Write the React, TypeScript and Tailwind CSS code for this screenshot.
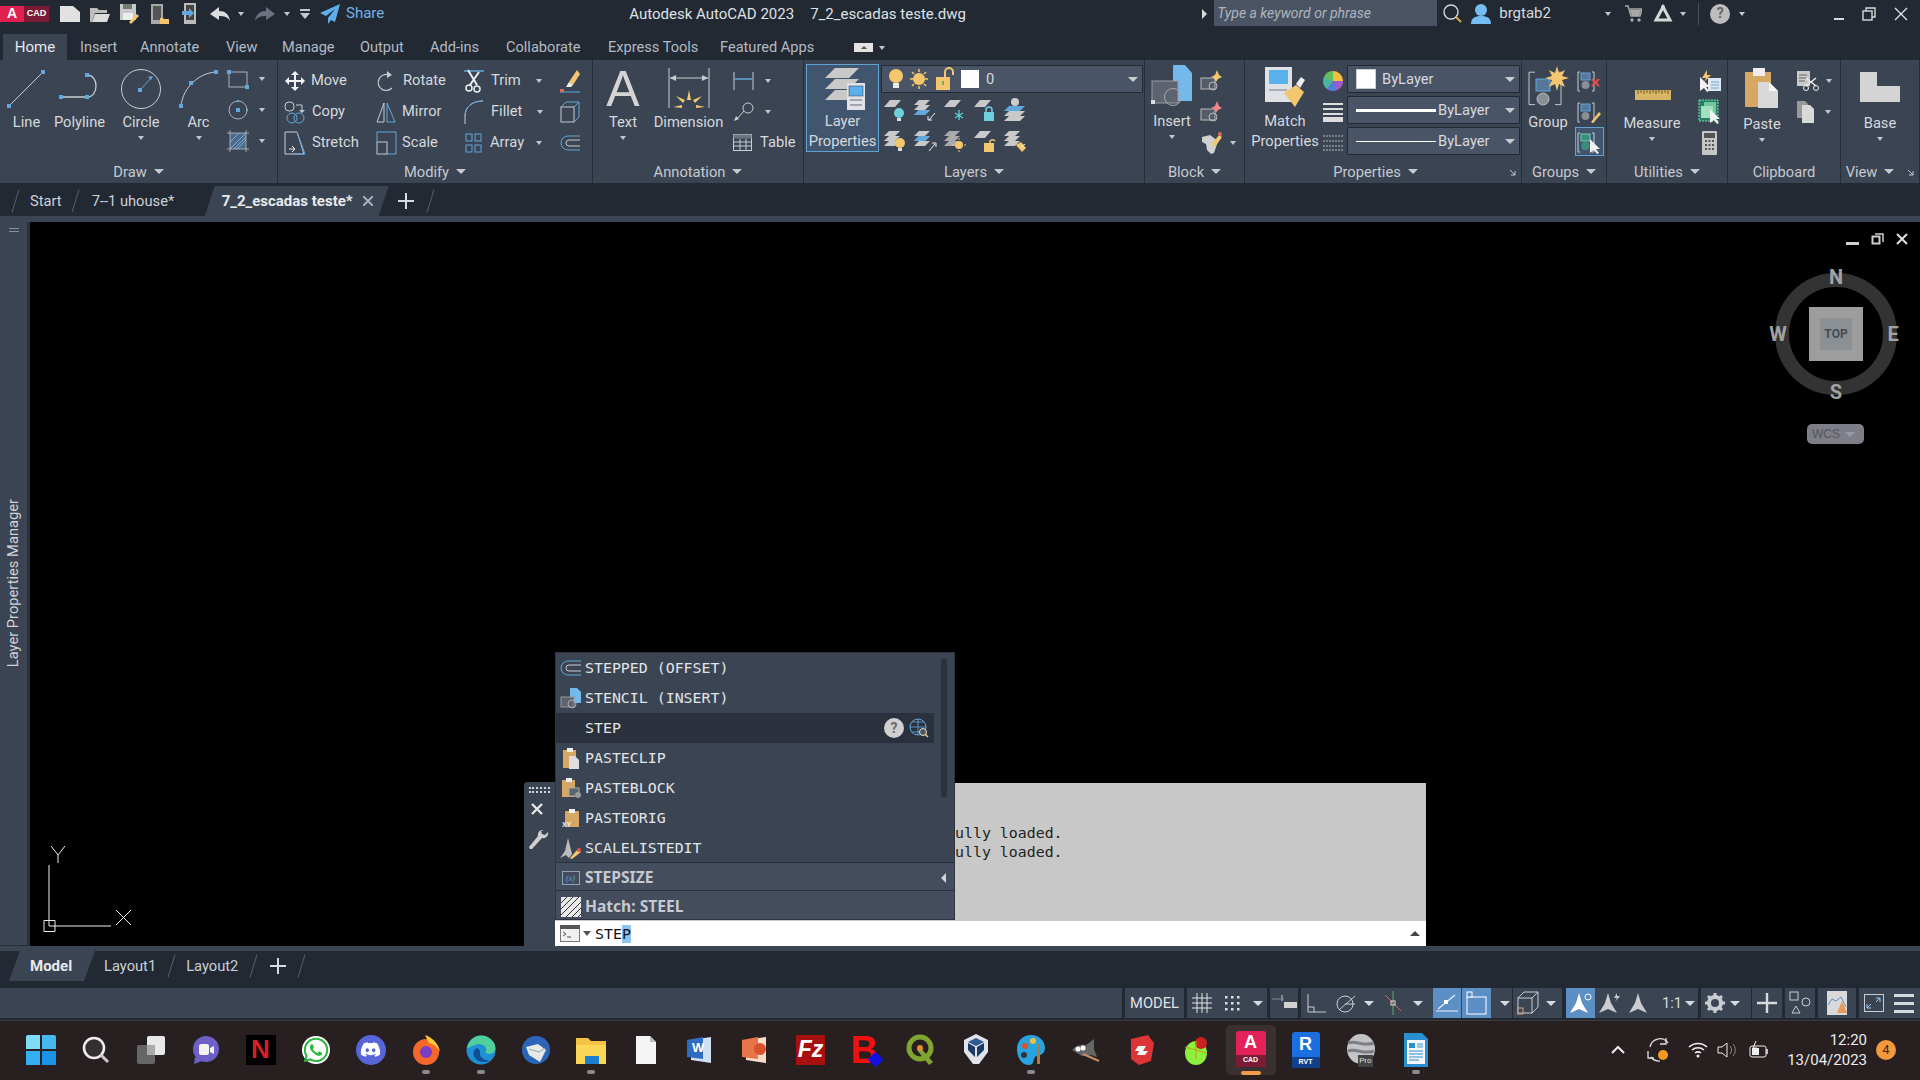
import type { ReactNode } from "react";
import { FaDiscord, FaWhatsapp } from "react-icons/fa";

const BLUE = "#62a8dc";
const GREY = "#c9ccd1";
const GOLD = "#f4c76e";
const BAR = "bg-[#222933]";

function Svg({ w, h, children }: { w: number; h: number; children: ReactNode }) {
  return (
    <svg width={w} height={h} viewBox={`0 0 ${w} ${h}`} fill="none" className="shrink-0 block">
      {children}
    </svg>
  );
}

function Caret({ className = "" }: { className?: string }) {
  return <span className={`block w-0 h-0 border-x-[3.5px] border-x-transparent border-t-[4px] border-t-[#c4c8ce] ${className}`} />;
}

function Tool({ icon, label, iconW, gap, width }: { icon: ReactNode; label?: string; iconW: number; gap: number; width: number }) {
  return (
    <div className="flex items-center h-[31px]" style={{ width }}>
      <div className="flex justify-center shrink-0" style={{ width: iconW }}>{icon}</div>
      {label && <span className="text-[14.7px] text-[#d6d9de] whitespace-nowrap" style={{ marginLeft: gap }}>{label}</span>}
    </div>
  );
}

function Big({ icon, label, width, caret, iconH = 46 }: { icon: ReactNode; label: string; width: number; caret?: boolean; iconH?: number }) {
  return (
    <div className="flex flex-col items-center shrink-0" style={{ width }}>
      <div className="flex items-center justify-center" style={{ height: iconH }}>{icon}</div>
      <span className="text-[14.7px] leading-[20px] text-[#d6d9de] whitespace-nowrap">{label}</span>
      {caret && <Caret className="mt-[4px]" />}
    </div>
  );
}

function Panel({ width, title, caret = true, expand, children, titlePull = 0 }: { width: number; title: string; caret?: boolean; expand?: boolean; children: ReactNode; titlePull?: number }) {
  return (
    <div className="flex flex-col shrink-0 border-r border-[#262d38] relative" style={{ width }}>
      <div className="h-[101px] flex overflow-visible">{children}</div>
      <div className="flex-1 flex items-center justify-center gap-[7px] text-[14.7px] text-[#c6cad0]" style={{ paddingRight: titlePull }}>
        {title}
        {caret && <span className="block w-0 h-0 border-x-[5px] border-x-transparent border-t-[5px] border-t-[#c6cad0]" />}
      </div>
      {expand && (
        <div className="absolute right-[4px] bottom-[6px]">
          <Svg w={8} h={8}><path d="M1 1l5 5M6 2v4H2" stroke="#c6cad0" /></Svg>
        </div>
      )}
    </div>
  );
}

const dot = (x: number, y: number, c = BLUE) => <rect x={x - 2} y={y - 2} width={4} height={4} fill={c} />;

const LineIc = <Svg w={40} h={40}>
  <path d="M2 37L36 3" stroke={GREY} />{dot(2, 37)}{dot(36, 3)}
</Svg>;
const PolyIc = <Svg w={44} h={36}>
  <path d="M2 26H28C40 26 40 4 28 4" stroke={GREY} strokeWidth="1.3" />{dot(2, 26)}{dot(28, 26)}{dot(28, 4)}
</Svg>;
const CircleIc = <Svg w={42} h={42}>
  <circle cx="21" cy="21" r="19.5" stroke={GREY} />
  <path d="M20 22L32 9" stroke={BLUE} />{dot(20, 22)}<path d="M33 8l-5 1 3 3z" fill={BLUE} />
</Svg>;
const ArcIc = <Svg w={40} h={40}>
  <path d="M2 37C4 18 20 4 37 3" stroke={GREY} />{dot(2, 37)}{dot(12, 14)}{dot(37, 3)}
</Svg>;
const RectIc = <Svg w={22} h={20}>
  <rect x="2" y="3" width="18" height="15" stroke={GREY} strokeWidth=".8" />{dot(2, 3)}{dot(20, 18)}
</Svg>;
const Circ2Ic = <Svg w={22} h={20}>
  <circle cx="11" cy="10" r="9" stroke={GREY} strokeWidth=".8" />{dot(11, 10)}<rect x="10" y="0" width="2" height="2" fill={BLUE} /><rect x="19" y="9" width="2" height="2" fill={BLUE} />
</Svg>;
const HatchIc = <Svg w={22} h={22}>
  <rect x="3" y="3" width="16" height="16" fill="#4a6c8c" />
  <path d="M3 12L12 3M3 19L19 3M10 19L19 10M7 19L19 7" stroke="#9fc3e2" strokeWidth=".7" />
  <path d="M0 3H22M0 19H22M3 0V22M19 0V22" stroke={GREY} strokeWidth=".7" />
</Svg>;
const MoveIc = <Svg w={22} h={22}>
  <path d="M11 1l4 4h-3v5h5V7l4 4-4 4v-3h-5v5h3l-4 4-4-4h3v-5H5v3l-4-4 4-4v3h5V5H7z" fill="#f1f2f4" />
</Svg>;
const RotateIc = <Svg w={20} h={22}>
  <path d="M13 5A8 8 0 1 0 16 18" stroke={GREY} strokeWidth="1.2" /><path d="M11 1l5 4-5 3z" fill={GREY} />
</Svg>;
const TrimIc = <Svg w={20} h={24}>
  <path d="M0 2H20" stroke={BLUE} strokeWidth="1.5" />
  <path d="M4 1l9 15M15 3L6 16" stroke="#eceef0" strokeWidth="2" />
  <circle cx="5" cy="19" r="3" stroke="#eceef0" strokeWidth="1.5" /><circle cx="13" cy="20" r="3" stroke="#eceef0" strokeWidth="1.5" />
</Svg>;
const EraserIc = <Svg w={22} h={24}>
  <path d="M10 13L18 1l3 4-7 11z" fill={GOLD} /><path d="M7 18l3-5 4 3-2 2z" fill="#f2f2f2" />
  <path d="M1 23H21" stroke={BLUE} /><rect x="1" y="20" width="4" height="3" fill="#e06a5a" />
</Svg>;
const CopyIc = <Svg w={22} h={24}>
  <rect x="1" y="2" width="9" height="9" rx="4" stroke={GREY} />
  <circle cx="8" cy="18" r="5" stroke={BLUE} /><circle cx="15" cy="18" r="5" stroke={BLUE} />
  <path d="M12 5h6v6" stroke={GREY} /><path d="M15 10l3 3 3-3z" fill={GREY} />
</Svg>;
const MirrorIc = <Svg w={20} h={24}>
  <path d="M8 3L1 22h7z" stroke={GREY} /><path d="M11 3l8 19h-8z" stroke={BLUE} />
</Svg>;
const FilletIc = <Svg w={20} h={24}>
  <path d="M1 24V16C1 7 8 1 19 1" stroke={GREY} /><path d="M1 16C1 7 8 1 19 1" stroke={BLUE} />
</Svg>;
const SolidIc = <Svg w={20} h={22}>
  <rect x="1" y="6" width="13" height="15" stroke={GREY} /><path d="M1 6l5-5h13v15l-5 5M14 6l5-5" stroke={BLUE} />
</Svg>;
const StretchIc = <Svg w={22} h={24}>
  <path d="M1 1H13L20 23H1z" stroke={GREY} /><path d="M13 1l8 22H10" stroke={BLUE} /><path d="M5 18h5M8 15l3 3-3 3" stroke="#eee" />
</Svg>;
const ScaleIc = <Svg w={21} h={24}>
  <rect x="1" y="11" width="10" height="12" stroke={GREY} /><path d="M1 11V1H20V23H11" stroke={BLUE} />
</Svg>;
const ArrayIc = <Svg w={18} h={20}>
  <g stroke={BLUE}><rect x="1" y="1" width="6" height="7" /><rect x="10" y="1" width="6" height="7" /><rect x="1" y="12" width="6" height="7" /><rect x="10" y="12" width="6" height="7" /></g>
</Svg>;
const OffsetIc = (w = 22) => <Svg w={w} h={16}>
  <path d="M21 1H8a7 7 0 0 0 0 14h13" stroke={BLUE} /><path d="M21 5H9a3 3 0 0 0 0 6h12" stroke={GREY} />
</Svg>;
const DimIc = <Svg w={42} h={42}>
  <path d="M1 0V40M41 0V40" stroke={GREY} /><path d="M2 10H40" stroke={GREY} /><path d="M2 10l6-3v6zM40 10l-6-3v6z" fill={GREY} />
  <path d="M21 22l-2 10h4zM8 28l7 7 2-3zM34 28l-7 7-2-3zM5 39l9-2v3zM37 39l-9-2v3z" fill={GOLD} />
</Svg>;
const LinearIc = <Svg w={22} h={20}><path d="M1 1V19M20 1V19" stroke={GREY} /><path d="M2 8H19" stroke={BLUE} strokeWidth="1.5" /></Svg>;
const LeaderIc = <Svg w={22} h={20}><circle cx="15" cy="6" r="5" stroke={GREY} /><path d="M11 9L3 18" stroke={GREY} /><path d="M1 19l5-2-3-3z" fill={GREY} /></Svg>;
const TableIc = <Svg w={20} h={18}><rect x=".5" y=".5" width="18" height="16" stroke={GREY} /><rect x=".5" y=".5" width="18" height="4" fill="#6c7480" /><path d="M1 8H18M1 12H18M7 5V17M13 5V17" stroke={GREY} /></Svg>;

const sheet = (y: number) => <path d={`M4 ${y}L14 ${y - 10}H38L28 ${y}z`} fill="#c9c9c9" />;
const LayerPropIc = <Svg w={48} h={46}>
  {sheet(13)}{sheet(24)}{sheet(35)}
  <rect x="26" y="18" width="18" height="27" fill="#dfe2e6" /><rect x="28" y="21" width="14" height="10" fill="#5ab0ea" stroke="#335" strokeWidth=".5" />
  <path d="M29 35h12M29 40h12" stroke="#667" />
</Svg>;

function Bulb({ color = GOLD }: { color?: string }) {
  return <Svg w={16} h={22}><circle cx="8" cy="8" r="7" fill={color} /><rect x="5" y="15" width="6" height="5" fill="#e8e8e8" /></Svg>;
}
const Sun = <Svg w={20} h={22}><circle cx="10" cy="11" r="6" fill={GOLD} /><path d="M10 1v3M10 18v3M1 11h3M16 11h3M3 4l2 2M15 16l2 2M17 4l-2 2M5 16l-2 2" stroke={GOLD} strokeWidth="1.5" /></Svg>;
const Unlock = <Svg w={20} h={24}><rect x="1" y="10" width="14" height="13" fill={GOLD} /><path d="M10 10V5a4 4 0 0 1 8 0v3" stroke={GOLD} strokeWidth="2" /><rect x="7" y="14" width="2" height="4" fill="#7a5" /></Svg>;

function LayerMini({ kind }: { kind: number }) {
  const top = <path d="M1 9L7 2h11l-6 7z" fill="#c9c9c9" />;
  const stack = (c = "#c9c9c9") => <g fill={c}><path d="M1 7L6 2h11l-5 5z" /><path d="M1 12L6 7h11l-5 5z" /><path d="M1 17L6 12h11l-5 5z" /></g>;
  const list: ReactNode[] = [
    <>{top}<circle cx="16" cy="15" r="5" fill="#6fd0e0" /><rect x="14" y="20" width="4" height="3" fill="#ddd" /></>,
    <>{stack()}<path d="M1 17L6 12h11l-5 5z" fill={BLUE} /><path d="M22 15l-6 7M15 18v4h4" stroke="#eee" /></>,
    <>{top}<path d="M16 12v10M12 15l8 5M20 15l-8 5" stroke="#5fd0d8" strokeWidth="1.3" /></>,
    <>{top}<rect x="11" y="14" width="10" height="9" fill="#6fd0e0" /><path d="M13 14v-2a3 3 0 0 1 6 0v2" stroke="#6fd0e0" strokeWidth="1.5" /></>,
    <><circle cx="12" cy="4" r="4" fill="#ccc" /><path d="M1 13L6 8h16l-5 5z" fill={BLUE} /><path d="M1 18L6 13h16l-5 5z" fill="#c9c9c9" /><path d="M1 23L6 18h16l-5 5z" fill="#c9c9c9" /></>,
    <>{stack()}<circle cx="17" cy="14" r="5" fill={GOLD} /><rect x="15" y="19" width="4" height="3" fill="#ddd" /></>,
    <>{stack()}<path d="M1 12L6 7h11l-5 5z" fill={BLUE} /><path d="M16 22l6-7M19 14h4v4" stroke="#eee" /></>,
    <>{stack("#aaa")}<circle cx="16" cy="16" r="4" fill={GOLD} /><path d="M16 9v2M16 21v2M9 16h2M21 16h2" stroke={GOLD} /></>,
    <>{top}<rect x="11" y="14" width="10" height="9" fill={GOLD} /><path d="M17 14v-2a3 3 0 0 1 5 0" stroke={GOLD} strokeWidth="1.5" /></>,
    <>{stack()}<path d="M13 16l5-3 5 6-4 4z" fill={GOLD} /><path d="M18 18l4-3" stroke="#fff" /></>,
  ];
  return <Svg w={24} h={24}>{list[kind]}</Svg>;
}

const InsertIc = <Svg w={42} h={42}>
  <path d="M22 0h12l7 8v28H22z" fill="#74b9ec" /><rect x="1" y="16" width="26" height="22" fill="#5d646f" stroke="#9a9ea5" />
  <circle cx="22" cy="32" r="8.5" stroke="#aaa" /><rect x="0" y="35" width="4" height="4" fill="#ddd" />
</Svg>;
const BlockSm = (c: string) => <Svg w={22} h={24}>
  <rect x="1" y="9" width="14" height="11" stroke="#bbb" fill="#555d69" /><circle cx="13" cy="17" r="4" stroke="#bbb" /><path d="M17 1l2 5 3 2-4 2-2 3-2-4-3-1 4-2z" fill={c} />
</Svg>;
const BlockEd = <Svg w={24} h={24}><path d="M2 6l8-2 8 6-4 12-3 1-4-4-1-6-4-2z" fill="#d0d0d0" /><path d="M12 13l7-9 3 2-7 10z" fill={GOLD} /><circle cx="20" cy="3" r="2" fill="#e06a5a" /></Svg>;
const MatchIc = <Svg w={40} h={40}>
  <rect x="0" y="0" width="27" height="35" fill="#dfe1e4" /><rect x="4" y="3" width="19" height="14" fill="#5ab0ea" />
  <path d="M4 23h18" stroke="#778" /><path d="M19 26l12-8 8 7-9 15z" fill={GOLD} /><path d="M31 17l5-7 4 3-5 8z" fill="#eee" />
</Svg>;
const Wheel = <Svg w={20} h={24}>
  <circle cx="10" cy="12" r="10" fill="#e24d4d" /><path d="M10 12V2A10 10 0 0 1 20 12z" fill="#f0c040" /><path d="M10 12h10a10 10 0 0 1-6 9z" fill="#9d5bd0" /><path d="M10 12l4 9a10 10 0 0 1-10-1z" fill="#4f7de0" /><path d="M10 12l-6 8a10 10 0 0 1-3-12z" fill="#45b8a0" /><path d="M10 12L1 8a10 10 0 0 1 9-6z" fill="#5fc060" />
</Svg>;
const WeightIc = <Svg w={20} h={20}><path d="M0 2H20M0 7H20" stroke="#ddd" strokeWidth="2" /><rect y="11" width="20" height="2" fill="#ddd" /><rect y="15" width="20" height="5" fill="#ddd" /></Svg>;
const LtypeIc = <Svg w={20} h={18}><path d="M0 2H20M0 7H20M0 12H20M0 16H20" stroke="#bbb" strokeDasharray="2 1" /></Svg>;
const GroupIc = <Svg w={42} h={44}>
  <path d="M8 8H2V44H8M28 8h6v36h-6" stroke={GREY} transform="translate(0,-1) scale(1,.9)" />
  <rect x="9" y="13" width="14" height="12" fill="#55789c" stroke={BLUE} /><circle cx="16" cy="33" r="6" fill="#8a8f96" stroke="#bbb" />
  <path d="M30 0l2 7 6-3-3 6 7 2-7 2 3 7-6-3-2 7-2-7-6 3 3-7-7-2 7-2-3-6 6 3z" fill={GOLD} />
</Svg>;
const GroupSm = (k: number) => <Svg w={24} h={24}>
  <path d="M3 3H1V22H3M15 3h2v19h-2" stroke={GREY} /><rect x="4" y="4" width="9" height="7" fill={k === 2 ? "#3d8f7a" : "#55789c"} stroke={k === 2 ? "#6fd0b0" : BLUE} /><circle cx="8.5" cy="16" r="4" fill={k === 2 ? "#3d8f7a" : "#8a8f96"} />
  {k === 0 && <path d="M15 10l7 7M22 10l-7 7" stroke="#e05050" strokeWidth="2" />}
  {k === 1 && <path d="M14 22l8-10 2 2-8 9z" fill={GOLD} />}
  {k === 2 && <path d="M13 9v14l4-3 3 4 2-1-3-4h4z" fill="#f2f2f2" />}
</Svg>;
const MeasureIc = <Svg w={36} h={12}>
  <rect width="36" height="10" y="1" fill="#d9b566" />
  <path d="M3 1v4M6 1v3M9 1v4M12 1v3M15 1v4M18 1v3M21 1v4M24 1v3M27 1v4M30 1v3M33 1v4" stroke="#6e5a2c" />
</Svg>;
const QuickIc = <Svg w={22} h={24}><path d="M8 1l-5 8h4l-2 4 7-7H8z" fill={GOLD} /><rect x="9" y="9" width="13" height="13" fill="#dfe6ee" /><path d="M12 13h8M12 16h8M12 19h8" stroke={BLUE} /><path d="M1 8v14l4-3 3 4 2-1-3-4h4z" fill="#f2f2f2" /></Svg>;
const SelectIc = <Svg w={24} h={26}><rect x="1" y="1" width="19" height="21" fill="#277e63" strokeDasharray="2 1" stroke="#74e0b0" /><rect x="6" y="3" width="12" height="12" fill="#72c89c" /><rect x="3" y="7" width="12" height="12" fill="#a2e0c0" /><path d="M12 10v14l4-3 3 4 2-1-3-4h4z" fill="#f2f2f2" /></Svg>;
const CalcIc = <Svg w={16} h={24}><rect x="0" y="0" width="15" height="24" rx="1" fill="#c6c6c6" /><rect x="2" y="2" width="11" height="5" fill="#555" /><path d="M3 10h9M3 14h9M3 18h9" stroke="#555" strokeWidth="2" strokeDasharray="2 1.5" /></Svg>;
const PasteIc = <Svg w={34} h={42}>
  <rect x="0" y="6" width="26" height="35" fill="#d7a864" /><rect x="8" y="2" width="12" height="8" fill="#eee" />
  <path d="M13 16h11l9 9v17H13z" fill="#d9d9d9" /><path d="M24 16l9 9h-9z" fill="#f5f5f5" />
</Svg>;
const CutIc = <Svg w={24} h={22}><path d="M1 1h13v15H1z" fill="#c9c9c9" /><path d="M3 5h8M3 8h8M3 11h6" stroke="#666" /><path d="M10 8l10 8M20 8L10 16" stroke="#eee" strokeWidth="1.5" /><circle cx="10" cy="18" r="2.5" stroke="#eee" /><circle cx="20" cy="18" r="2.5" stroke="#eee" /></Svg>;
const CopyClipIc = <Svg w={20} h={24}><path d="M1 1h8l3 3v14H1z" fill="#999" /><path d="M6 5h8l4 4v14H6z" fill="#d9d9d9" /></Svg>;
const BaseIc = <Svg w={40} h={30}><path d="M0 0H17V14H40V30H0z" fill="#d4d4d4" /></Svg>;

const Combo = ({ children, h }: { children: ReactNode; h: number }) => (
  <div className="relative flex items-center bg-[#4a5467] border border-[#222933] rounded-[1px]" style={{ height: h }}>
    {children}
    <span className="absolute right-[4px] w-0 h-0 border-x-[5px] border-x-transparent border-t-[5px] border-t-[#c9ccd1]" />
  </div>
);

function Ribbon() {
  return (
    <div className="flex h-[123px] bg-[#3b4452]">
      <Panel width={278} title="Draw">
        <div className="flex pt-[6px] pl-[3px]">
          <Big width={47} icon={LineIc} label="Line" />
          <Big width={59} icon={<div className="pl-[2px]">{PolyIc}</div>} label="Polyline" />
          <div className="w-[7px]" />
          <Big width={50} icon={CircleIc} label="Circle" caret />
          <div className="w-[9px]" />
          <Big width={47} icon={ArcIc} label="Arc" caret />
          <div className="w-[5px] flex-none" />
          <div className="-mt-[3px]">
            <Tool width={44} icon={RectIc} iconW={22} gap={0} />
            <Tool width={44} icon={Circ2Ic} iconW={22} gap={0} />
            <Tool width={44} icon={HatchIc} iconW={22} gap={0} />
          </div>
          <div className="flex flex-col -ml-[12px] -mt-[3px] w-[10px]">
            <div className="h-[31px] flex items-center"><Caret /></div>
            <div className="h-[31px] flex items-center"><Caret /></div>
            <div className="h-[31px] flex items-center"><Caret /></div>
          </div>
        </div>
      </Panel>
      <Panel width={315} title="Modify">
        <div className="flex pt-[5px] pl-[7px]">
          <div className="w-[91px]">
            <Tool width={91} icon={MoveIc} iconW={20} gap={6} label="Move" />
            <Tool width={91} icon={CopyIc} iconW={20} gap={7} label="Copy" />
            <Tool width={91} icon={StretchIc} iconW={20} gap={7} label="Stretch" />
          </div>
          <div className="w-[88px]">
            <Tool width={88} icon={RotateIc} iconW={20} gap={7} label="Rotate" />
            <Tool width={88} icon={MirrorIc} iconW={20} gap={6} label="Mirror" />
            <Tool width={88} icon={ScaleIc} iconW={20} gap={6} label="Scale" />
          </div>
          <div className="w-[95px]">
            <div className="flex items-center h-[31px]"><div className="w-[20px] flex justify-center">{TrimIc}</div><span className="ml-[7px] text-[14.7px] text-[#d6d9de]">Trim</span><Caret className="ml-[15px]" /></div>
            <div className="flex items-center h-[31px]"><div className="w-[20px] flex justify-center">{FilletIc}</div><span className="ml-[7px] text-[14.7px] text-[#d6d9de]">Fillet</span><Caret className="ml-[15px]" /></div>
            <div className="flex items-center h-[31px]"><div className="w-[20px] flex justify-center">{ArrayIc}</div><span className="ml-[6px] text-[14.7px] text-[#d6d9de]">Array</span><Caret className="ml-[12px]" /></div>
          </div>
          <div className="w-[22px]">
            <Tool width={22} icon={EraserIc} iconW={22} gap={0} />
            <Tool width={22} icon={SolidIc} iconW={22} gap={0} />
            <Tool width={22} icon={OffsetIc(20)} iconW={22} gap={0} />
          </div>
        </div>
      </Panel>
      <Panel width={211} title="Annotation">
        <div className="flex pt-[6px]">
          <div className="w-[60px] flex flex-col items-center">
            <div className="h-[46px] text-[50px] leading-[46px] text-[#d4d4d4] font-['Liberation_Sans',sans-serif]">A</div>
            <span className="text-[14.7px] leading-[20px] text-[#d6d9de]">Text</span>
            <Caret className="mt-[4px]" />
          </div>
          <Big width={71} icon={DimIc} label="Dimension" />
          <div className="ml-[9px] -mt-[1px]">
            <div className="flex items-center h-[31px]">{LinearIc}<Caret className="ml-[10px]" /></div>
            <div className="flex items-center h-[31px]">{LeaderIc}<Caret className="ml-[10px]" /></div>
            <div className="flex items-center h-[31px]">{TableIc}<span className="ml-[7px] text-[14.7px] text-[#d6d9de]">Table</span></div>
          </div>
        </div>
      </Panel>
      <Panel width={341} title="Layers">
        <div className="flex pt-[4px] pl-[2px]">
          <div className="w-[73px] h-[88px] border border-[#5fa2d2] bg-[#41566e] flex flex-col items-center shrink-0">
            <div className="h-[47px] flex items-end pl-[4px]">{LayerPropIc}</div>
            <span className="text-[14.7px] leading-[20px] text-[#d6d9de]">Layer</span>
            <span className="text-[14.7px] leading-[20px] text-[#d6d9de] whitespace-nowrap">Properties</span>
          </div>
          <div className="ml-[2px] w-[262px] pt-[1px]">
            <Combo h={28}>
              <div className="ml-[6px]"><Bulb /></div>
              <div className="ml-[5px]">{Sun}</div>
              <div className="ml-[6px]">{Unlock}</div>
              <div className="ml-[6px] w-[18px] h-[18px] bg-white" />
              <span className="ml-[7px] text-[14.7px] text-[#d6d9de]">0</span>
            </Combo>
            <div className="flex mt-[2px] gap-[6px] pl-[2px] h-[30px] items-center">
              {[0, 1, 2, 3, 4].map((k) => <LayerMini key={k} kind={k} />)}
            </div>
            <div className="flex mt-[1px] gap-[6px] pl-[2px] h-[30px] items-center">
              {[5, 6, 7, 8, 9].map((k) => <LayerMini key={k} kind={k} />)}
            </div>
          </div>
        </div>
      </Panel>
      <Panel width={100} title="Block">
        <div className="flex pt-[5px] pl-[6px]">
          <div className="w-[42px] flex flex-col items-center">
            <div className="h-[46px]">{InsertIc}</div>
            <span className="text-[14.7px] leading-[20px] text-[#d6d9de]">Insert</span>
            <Caret className="mt-[4px]" />
          </div>
          <div className="ml-[7px]">
            <div className="h-[31px] flex items-center">{BlockSm(GOLD)}</div>
            <div className="h-[31px] flex items-center">{BlockSm("#e88")}</div>
            <div className="h-[31px] flex items-center">{BlockEd}<Caret className="ml-[6px]" /></div>
          </div>
        </div>
      </Panel>
      <Panel width={277} title="Properties" titlePull={15} expand>
        <div className="flex pt-[5px] pl-[4px]">
          <div className="w-[72px] flex flex-col items-center shrink-0">
            <div className="h-[46px] pt-[2px]">{MatchIc}</div>
            <span className="text-[14.7px] leading-[20px] text-[#d6d9de]">Match</span>
            <span className="text-[14.7px] leading-[20px] text-[#d6d9de] whitespace-nowrap">Properties</span>
          </div>
          <div className="w-[23px] flex flex-col items-center">
            <div className="h-[31px] flex items-center">{Wheel}</div>
            <div className="h-[31px] flex items-center">{WeightIc}</div>
            <div className="h-[31px] flex items-center">{LtypeIc}</div>
          </div>
          <div className="ml-[3px] w-[173px] flex flex-col gap-[3px]">
            <Combo h={28}><div className="ml-[8px] w-[20px] h-[20px] bg-white border border-[#ccc]" /><span className="ml-[6px] text-[14.7px] text-[#d6d9de]">ByLayer</span></Combo>
            <Combo h={28}><div className="ml-[8px] w-[80px] h-[3px] bg-white" /><span className="ml-[2px] text-[14.7px] text-[#d6d9de]">ByLayer</span></Combo>
            <Combo h={28}><div className="ml-[8px] w-[80px] h-[1px] bg-white" /><span className="ml-[2px] text-[14.7px] text-[#d6d9de]">ByLayer</span></Combo>
          </div>
        </div>
      </Panel>
      <Panel width={85} title="Groups">
        <div className="flex pt-[6px] pl-[5px]">
          <div className="w-[42px] flex flex-col items-center">
            <div className="h-[46px]">{GroupIc}</div>
            <span className="text-[14.7px] leading-[20px] text-[#d6d9de]">Group</span>
          </div>
          <div className="ml-[5px] -mt-[1px] w-[30px] flex flex-col items-center">
            <div className="h-[31px] flex items-center">{GroupSm(0)}</div>
            <div className="h-[31px] flex items-center">{GroupSm(1)}</div>
            <div className="h-[29px] w-[29px] border border-[#5fa2d2] bg-[#41566e] flex items-center justify-center">{GroupSm(2)}</div>
          </div>
        </div>
      </Panel>
      <Panel width={121} title="Utilities">
        <div className="flex pt-[5px]">
          <div className="w-[90px] flex flex-col items-center">
            <div className="h-[48px] flex items-end pb-[12px] pl-[2px]">{MeasureIc}</div>
            <span className="text-[14.7px] leading-[20px] text-[#d6d9de]">Measure</span>
            <Caret className="mt-[4px]" />
          </div>
          <div className="w-[26px] flex flex-col items-center">
            <div className="h-[31px] flex items-center">{QuickIc}</div>
            <div className="h-[31px] flex items-center">{SelectIc}</div>
            <div className="h-[31px] flex items-center">{CalcIc}</div>
          </div>
        </div>
      </Panel>
      <Panel width={113} title="Clipboard" caret={false}>
        <div className="flex pt-[6px] pl-[16px]">
          <div className="w-[36px] flex flex-col items-center">
            <div className="h-[48px]">{PasteIc}</div>
            <span className="text-[14.7px] leading-[20px] text-[#d6d9de]">Paste</span>
            <Caret className="mt-[4px]" />
          </div>
          <div className="ml-[16px] -mt-[1px]">
            <div className="h-[31px] flex items-center">{CutIc}<Caret className="ml-[6px]" /></div>
            <div className="h-[31px] flex items-center">{CopyClipIc}<Caret className="ml-[9px]" /></div>
          </div>
        </div>
      </Panel>
      <Panel width={79} title="View" titlePull={20} expand>
        <div className="flex flex-col items-center w-full pt-[12px]">
          <div className="h-[41px]">{BaseIc}</div>
          <span className="text-[14.7px] leading-[20px] text-[#d6d9de]">Base</span>
          <Caret className="mt-[4px]" />
        </div>
      </Panel>
    </div>
  );
}

function TitleBar() {
  return (
    <div className={`flex items-center h-[30px] ${BAR} text-[#d6d9de]`}>
      <div className="flex h-[16px] items-stretch mt-[-3px]">
        <div className="w-[24px] bg-[#e0204e] text-white text-[14px] font-bold flex items-center justify-center font-['Liberation_Sans',sans-serif]">A</div>
        <div className="w-[25px] bg-[#7d1a35] text-white text-[9px] font-bold flex items-center justify-center font-['Liberation_Sans',sans-serif]">CAD</div>
      </div>
      <div className="ml-[11px] -mt-[3px] flex items-center">
        <Svg w={20} h={16}><path d="M0 0h13l7 6v10H0z" fill="#e2e2e2" /></Svg>
        <div className="ml-[10px]"><Svg w={20} h={16}><path d="M0 2h7l2 2h8v3H5L2 16H0z" fill="#bdbdbd" /><path d="M5 8h15l-3 8H2z" fill="#dcdcdc" /></Svg></div>
        <div className="ml-[10px]"><Svg w={20} h={20}><rect x="0" y="0" width="16" height="16" fill="#c9c9c9" /><rect x="3" y="0" width="9" height="5" fill="#777" /><rect x="3" y="9" width="10" height="7" fill="#eee" /><path d="M9 18l8-8 2 2-8 8z" fill={GOLD} /></Svg></div>
        <div className="ml-[10px]"><Svg w={20} h={20}><rect x="1" y="0" width="12" height="20" fill="#aaa" /><rect x="3" y="2" width="8" height="14" fill="#555" /><path d="M10 14h3l1 1h5v5H10z" fill={GOLD} /></Svg></div>
        <div className="ml-[12px]"><Svg w={16} h={22}><rect x="2" y="0" width="12" height="21" fill="#bbb" /><rect x="4" y="2" width="8" height="15" fill="#444" /><path d="M0 8h7V5l5 5-5 5v-3H0z" fill={BLUE} /></Svg></div>
        <div className="ml-[12px]"><Svg w={20} h={14}><path d="M0 7l9-7v4c6 0 10 3 11 10-2-4-6-5-11-5v4z" fill="#dcdcdc" /></Svg></div>
        <Caret className="ml-[8px]" />
        <div className="ml-[11px]"><Svg w={20} h={14}><path d="M20 7l-9-7v4C5 4 1 7 0 14c2-4 6-5 11-5v4z" fill="#6a7280" /></Svg></div>
        <Caret className="ml-[9px]" />
        <div className="ml-[10px] flex flex-col items-center gap-[2px]"><span className="block w-[10px] h-[2px] bg-[#c4c8ce]" /><span className="block w-0 h-0 border-x-[5px] border-x-transparent border-t-[6px] border-t-[#c4c8ce]" /></div>
        <div className="ml-[10px]"><Svg w={20} h={20}><path d="M20 0L0 9l6 3 9-7-7 9v6l3-4 4 2z" fill="#5fb0ea" /></Svg></div>
        <span className="ml-[6px] text-[15px] text-[#72b3e6]">Share</span>
      </div>
      <div className="ml-[245px] -mt-[1px] flex gap-[16px] text-[15px] text-[#dfe1e5] whitespace-nowrap w-[328px]">
        <span>Autodesk AutoCAD 2023</span>
        <span>7_2_escadas teste.dwg</span>
      </div>
      <div className="ml-[245px] w-0 h-0 -mt-[3px] border-y-[5px] border-y-transparent border-l-[5px] border-l-[#d6d9de]" />
      <div className="ml-[7px] w-[223px] h-[26px] self-start bg-[#4a5464] flex items-center pl-[3px] text-[14px] italic text-[#aeb4bd]">Type a keyword or phrase</div>
      <div className="ml-[6px] -mt-[3px]"><Svg w={19} h={20}><circle cx="8" cy="8" r="7" stroke="#d8d8d8" strokeWidth="1.4" /><path d="M13 13l5 5" stroke="#d9a84e" strokeWidth="2" /></Svg></div>
      <div className="ml-[9px] -mt-[3px]"><Svg w={20} h={20}><circle cx="10" cy="6" r="6" fill="#74bdf0" /><path d="M0 20c0-6 4-8 10-8s10 2 10 8z" fill="#74bdf0" /></Svg></div>
      <span className="ml-[8px] -mt-[3px] text-[15px] text-[#d6d9de] w-[106px]">brgtab2</span>
      <Caret className="-mt-[3px]" />
      <div className="ml-[14px] -mt-[3px]"><Svg w={17} h={18}><path d="M0 1h3l3 10h9l2-7H5" stroke="#a9a9a9" strokeWidth="1.5" /><path d="M5 5h11l-2 6H7z" fill="#a9a9a9" /><circle cx="7" cy="15" r="1.7" fill="#a9a9a9" /><circle cx="14" cy="15" r="1.7" fill="#a9a9a9" /></Svg></div>
      <div className="ml-[11px] -mt-[3px]"><Svg w={20} h={20}><path d="M10 3L3 16h14z" stroke="#d8d8d8" strokeWidth="3" /><circle cx="10" cy="3" r="2" fill="#d8d8d8" /></Svg></div>
      <Caret className="ml-[7px] -mt-[3px]" />
      <div className="ml-[12px] -mt-[3px] w-px h-[22px] bg-[#495160]" />
      <div className="ml-[11px] -mt-[3px] w-[20px] h-[20px] rounded-full bg-[#bdbdbd] text-[#666] text-[14px] font-bold flex items-center justify-center">?</div>
      <Caret className="ml-[9px] -mt-[3px]" />
      <div className="ml-[89px] mt-[8px] w-[10px] h-[2px] bg-[#d8d8d8]" />
      <div className="ml-[18px] -mt-[3px]"><Svg w={14} h={14}><rect x="1" y="4" width="9" height="9" stroke="#d8d8d8" strokeWidth="1.4" /><path d="M4 4V1h9v9h-3" stroke="#d8d8d8" strokeWidth="1.4" /></Svg></div>
      <div className="ml-[18px] -mt-[3px]"><Svg w={14} h={14}><path d="M1 1l12 12M13 1L1 13" stroke="#e6e6e6" strokeWidth="1.3" /></Svg></div>
    </div>
  );
}

function MenuTabs() {
  const tabs: [string, number][] = [["Insert", 60], ["Annotate", 86], ["View", 56], ["Manage", 78], ["Output", 70], ["Add-ins", 76], ["Collaborate", 102], ["Express Tools", 112], ["Featured Apps", 134]];
  return (
    <div className={`flex items-end h-[30px] ${BAR}`}>
      <div className="ml-[3px] mr-[13px] w-[64px] h-[26px] pt-[1px] bg-[#3b4452] flex items-center justify-center text-[15px] text-[#e6e8eb]">Home</div>
      {tabs.map(([t, w]) => (
        <span key={t} className="h-[26px] pt-[1px] flex items-center text-[14.6px] text-[#b4bac4] whitespace-nowrap" style={{ width: w }}>
          {t}
        </span>
      ))}
      <div className="mb-[8px] w-[19px] h-[9px] bg-[#e4e4e4] flex items-center justify-center"><span className="block w-0 h-0 border-x-[3px] border-x-transparent border-b-[3px] border-b-[#555]" /></div>
      <Caret className="ml-[6px] mb-[10px]" />
    </div>
  );
}

function Slash({ className = "" }: { className?: string }) {
  return <span className={`block w-px h-[24px] bg-[#555d6b] rotate-[17deg] ${className}`} />;
}

function DocTabs() {
  return (
    <div className={`flex items-end h-[33px] ${BAR}`}>
      <div className="flex items-center h-[30px] w-full text-[14.7px] [font-variant-ligatures:none]">
        <Slash className="ml-[15px]" />
        <span className="ml-[14px] pt-[1px] text-[#ccd0d6]">Start</span>
        <Slash className="ml-[13px]" />
        <span className="ml-[16px] pt-[1px] w-[85px] whitespace-nowrap text-[#ccd0d6]">7--1 uhouse*</span>
        <div className="ml-[28px] w-[184px] h-[30px] bg-[#3b4452] [clip-path:polygon(10px_0,100%_0,174px_100%,0_100%)] flex items-center pl-[17px]">
          <span className="pt-[1px] font-bold text-[15px] text-[#e8eaed] whitespace-nowrap w-[141px]">7_2_escadas teste*</span>
          <span><Svg w={10} h={10}><path d="M0 0l10 10M10 0L0 10" stroke="#aab0b9" strokeWidth="2" /></Svg></span>
        </div>
        <div className="ml-[9px]"><Svg w={16} h={16}><path d="M8 0V16M0 8H16" stroke="#d8dbe0" strokeWidth="2" /></Svg></div>
        <Slash className="ml-[16px]" />
      </div>
    </div>
  );
}

function ViewCube() {
  return (
    <div className="absolute left-[1770px] top-[50px] w-[132px] h-[180px]">
      <div className="absolute left-[5px] top-[1px] w-[122px] h-[122px] rounded-full border-[14px] border-[#333333]" />
      <div className="absolute left-[39px] top-[35px] w-[54px] h-[54px] bg-[#9d9d9d] flex items-center justify-center">
        <div className="w-[32px] h-[32px] bg-[#8b9094] flex items-center justify-center text-[12px] font-bold text-[#444c55]">TOP</div>
      </div>
      {[["N", 66, 5], ["S", 66, 120], ["W", 8, 62], ["E", 123, 62]].map(([t, x, y]) => (
        <span key={t as string} className="absolute -translate-x-1/2 -translate-y-1/2 text-[20px] font-bold text-[#a2a2a2]" style={{ left: x as number, top: y as number }}>{t}</span>
      ))}
      <div className="absolute left-[37px] top-[152px] w-[57px] h-[20px] rounded-[5px] bg-[#7e7e88] flex items-center pl-[5px] text-[12px] text-[#55565c] gap-[5px] font-['Liberation_Sans',sans-serif]">
        WCS<span className="block w-0 h-0 border-x-[5px] border-x-transparent border-t-[5px] border-t-[#9a9aa4]" />
      </div>
    </div>
  );
}

function AutoItem({ icon, label, active }: { icon: ReactNode; label: string; active?: boolean }) {
  return (
    <div className={`flex items-center h-[30px] w-[378px] ${active ? "bg-[#2a303c]" : ""}`}>
      <div className="w-[29px] flex justify-center shrink-0">{icon}</div>
      <span className="text-[14.9px] text-[#e2e4e8] font-['DejaVu_Sans_Mono',monospace] whitespace-pre">{label}</span>
      {active && (
        <div className="ml-auto mr-[5px] flex items-center gap-[5px]">
          <div className="w-[20px] h-[20px] rounded-full bg-[#d0d0d0] text-[#6c6c6c] text-[14px] font-bold flex items-center justify-center">?</div>
          <Svg w={20} h={20}><circle cx="9" cy="9" r="8" stroke={BLUE} /><path d="M1 9H17M9 1V17M3 4H15M3 14H15" stroke={BLUE} strokeWidth=".8" /><circle cx="14" cy="14" r="3.5" fill="#555" stroke="#ddd" /><path d="M16 16l3 3" stroke={GOLD} strokeWidth="1.5" /></Svg>
        </div>
      )}
    </div>
  );
}

function CommandLine() {
  return (
    <>
      <div className="absolute left-[524px] bottom-0 w-[902px] h-[164px] flex">
        <div className="w-[31px] bg-[#3b4452] rounded-tl-[3px] flex flex-col items-center pt-[5px]">
          <div className="grid grid-cols-6 gap-x-[1px] gap-y-[2px] w-[22px]">
            {Array.from({ length: 12 }).map((_, i) => <span key={i} className="block w-[2px] h-[2px] bg-[#d0d3d8]" />)}
          </div>
          <div className="mt-[10px] -ml-[6px]"><Svg w={12} h={12}><path d="M1 1l10 10M11 1L1 11" stroke="#e6e6e6" strokeWidth="2.4" /></Svg></div>
          <div className="mt-[15px] -ml-[2px]"><Svg w={20} h={20}><path d="M1 19l2 0L13 8a5 5 0 0 0 6-6l-3 3-3-1-1-3 3-1a5 5 0 0 0-6 6L0 17z" fill="#d0d0d0" /></Svg></div>
        </div>
        <div className="flex-1 flex flex-col">
          <div className="flex-1 mt-[1px] bg-[#c8c8c8] pl-[400px] pt-[41px] text-[14.9px] leading-[19px] text-[#222] font-['DejaVu_Sans_Mono',monospace]">
            <div>ully loaded.</div>
            <div>ully loaded.</div>
          </div>
          <div className="h-[25px] bg-white flex items-center pl-[5px] relative">
            <Svg w={20} h={17}><rect x=".5" y=".5" width="19" height="16" fill="#f0f0f0" stroke="#777" /><rect width="20" height="4" fill="#555" /><path d="M3 7l3 2-3 2M7 12h4" stroke="#555" /></Svg>
            <span className="ml-[3px] w-0 h-0 border-x-[4px] border-x-transparent border-t-[5px] border-t-[#555]" />
            <span className="ml-[4px] mt-[1px] text-[14.9px] text-[#111] font-['DejaVu_Sans_Mono',monospace]">STE<span className="bg-[#90c4f0]">P</span></span>
            <span className="absolute right-[6px] w-0 h-0 border-x-[5px] border-x-transparent border-b-[5px] border-b-[#444]" />
          </div>
        </div>
      </div>
      <div className="absolute left-[555px] bottom-[26px] w-[400px] h-[268px] bg-[#3b4452] border border-[#2e3540]">
        <div>
          <AutoItem icon={OffsetIc(22)} label="STEPPED (OFFSET)" />
          <AutoItem icon={<Svg w={22} h={22}><path d="M10 1h7l4 4v11H10z" fill="#74b9ec" /><rect x="1" y="10" width="13" height="10" fill="#5d646f" stroke="#999" /><circle cx="12" cy="17" r="4" stroke="#aaa" /></Svg>} label="STENCIL (INSERT)" />
          <AutoItem icon={<span />} label="STEP" active />
          <AutoItem icon={<Svg w={18} h={22}><rect x="1" y="3" width="13" height="18" fill="#d7a864" /><rect x="5" y="1" width="6" height="4" fill="#eee" /><path d="M7 9h6l4 4v9H7z" fill="#ddd" /></Svg>} label="PASTECLIP" />
          <AutoItem icon={<Svg w={20} h={22}><rect x="1" y="3" width="13" height="17" fill="#d7a864" /><rect x="5" y="1" width="6" height="4" fill="#eee" /><rect x="8" y="11" width="10" height="8" fill="#5d646f" stroke="#aaa" /><circle cx="17" cy="18" r="3" fill="#999" /></Svg>} label="PASTEBLOCK" />
          <AutoItem icon={<Svg w={18} h={20}><rect x="3" y="3" width="14" height="16" fill="#d7a864" /><rect x="7" y="1" width="6" height="4" fill="#eee" /><text x="0" y="19" fontSize="7" fontWeight="700" fill="#eee" fontFamily="Liberation Sans">XY</text></Svg>} label="PASTEORIG" />
          <AutoItem icon={<Svg w={22} h={22}><path d="M8 1l4 16-3 4-3-3-6 3 5-7z" fill="#bdbdbd" /><path d="M10 21l8-9 3 3-9 7z" fill={GOLD} /><circle cx="19" cy="13" r="2" fill="#e05050" /></Svg>} label="SCALELISTEDIT" />
        </div>
        <div className="absolute right-[7px] top-[5px] w-[6px] h-[140px] rounded-[3px] bg-[#2b3240]" />
        <div className="absolute left-0 right-0 top-[209px] h-[29px] pt-[3px] bg-[#434d5e] border-y border-[#2a303c] flex items-center">
          <div className="w-[29px] flex justify-center"><Svg w={18} h={14}><rect x=".5" y=".5" width="17" height="13" stroke="#8fa3b8" /><text x="4" y="10" fontSize="8" fontStyle="italic" fill={BLUE} fontFamily="Liberation Serif">(x)</text></Svg></div>
          <span className="text-[15.6px] font-bold text-[#c6cad0] font-['Noto_Sans',sans-serif]">STEPSIZE</span>
          <span className="absolute right-[8px] w-0 h-0 border-y-[5px] border-y-transparent border-r-[5px] border-r-[#d0d3d8]" />
        </div>
        <div className="absolute left-0 right-0 top-[238px] h-[28px] pt-[3px] bg-[#434d5e] flex items-center">
          <div className="w-[29px] flex justify-center">
            <Svg w={20} h={20}><rect width="20" height="20" fill="#e8e8e8" /><path d="M0 6L6 0M0 12L12 0M0 18L18 0M5 20L20 5M11 20l9-9M17 20l3-3" stroke="#333" /></Svg>
          </div>
          <span className="text-[15.6px] font-bold text-[#c6cad0] font-['Noto_Sans',sans-serif]">Hatch: STEEL</span>
        </div>
      </div>
    </>
  );
}

function Canvas() {
  return (
    <div className="relative flex h-[724px] bg-[#2b323e]">
      <div className="w-[27px] bg-[#3b4452] flex flex-col items-center border-b border-[#262d38]">
        <div className="mt-[6px] w-[10px] h-[4px] border-y border-[#8a909a]" />
        <span className="mt-[267px] [writing-mode:vertical-rl] rotate-180 text-[14.7px] text-[#d0d3d8] whitespace-nowrap">Layer Properties Manager</span>
      </div>
      <div className="ml-[3px] flex-1 bg-black" />
      <div className="absolute left-[1846px] top-[10px] flex items-center">
        <div className="w-[13px] h-[3px] mt-[9px] bg-[#d0d0d0]" />
        <div className="ml-[12px]"><Svg w={13} h={13}><rect x="1.5" y="4.5" width="7" height="7" stroke="#d0d0d0" strokeWidth="2" /><path d="M4 2h8v8" stroke="#d0d0d0" strokeWidth="1.5" /></Svg></div>
        <div className="ml-[12px]"><Svg w={12} h={12}><path d="M1 1l10 10M11 1L1 11" stroke="#e0e0e0" strokeWidth="2" /></Svg></div>
      </div>
      <ViewCube />
      <div className="absolute left-[40px] top-[620px]">
        <Svg w={96} h={92}>
          <path d="M9 23V84H71M4 78.5H15V89.5H4z" stroke="#eee" />
          <path d="M11 4l7 9 7-9M18 13V21M76 68l15 15M91 68L76 83" stroke="#eee" />
        </Svg>
      </div>
      <CommandLine />
    </div>
  );
}

function LayoutTabs() {
  return (
    <div className={`flex items-center h-[37px] ${BAR} text-[14.7px]`}>
      <div className="ml-[9px] mt-[-7px] w-[86px] h-[30px] bg-[#3b4452] [clip-path:polygon(11px_0,100%_0,75px_100%,0_100%)] flex items-center pl-[21px] font-bold text-[15px] text-[#e8eaed]">Model</div>
      <span className="ml-[9px] -mt-[7px] text-[#ccd0d6]">Layout1</span>
      <Slash className="ml-[15px] -mt-[7px]" />
      <span className="ml-[14px] -mt-[7px] text-[#ccd0d6]">Layout2</span>
      <Slash className="ml-[15px] -mt-[7px]" />
      <div className="ml-[16px] -mt-[7px]"><Svg w={16} h={16}><path d="M8 0V16M0 8H16" stroke="#d8dbe0" strokeWidth="2" /></Svg></div>
      <Slash className="ml-[15px] -mt-[7px]" />
    </div>
  );
}

function StatusBtn({ children, on, w = 28 }: { children: ReactNode; on?: boolean; w?: number }) {
  return <div className={`h-full flex items-center justify-center shrink-0 ${on ? "bg-[#5c8fc4]" : ""}`} style={{ width: w }}>{children}</div>;
}
function SCaret() {
  return <span className="block w-0 h-0 border-x-[5px] border-x-transparent border-t-[5px] border-t-[#d6d9de] shrink-0 mx-[3px]" />;
}
function Seg({ width, children, className = "" }: { width: number; children: ReactNode; className?: string }) {
  return <div className={`h-full bg-[#3b4452] flex items-center shrink-0 ${className}`} style={{ width }}>{children}</div>;
}
const Rocket = ({ c = "#c9ccd1", mark }: { c?: string; mark?: "ring" | "bolt" }) => (
  <Svg w={24} h={20}>
    <path d="M10 0l3 10 6 10-9-4-9 4 6-10z" fill={c} />
    {mark === "ring" && <circle cx="19" cy="4" r="3" stroke={c} />}
    {mark === "bolt" && <path d="M19 0l-3 5h3l-2 4 5-6h-3z" fill={c} />}
  </Svg>
);

function StatusBar() {
  return (
    <div className={`flex h-[30px] ${BAR} gap-[3px]`}>
      <div className="w-[1122px] bg-[#3b4452] shrink-0" />
      <Seg width={59} className="justify-center text-[14.7px] text-[#e0e2e6]">MODEL</Seg>
      <Seg width={80}>
        <StatusBtn w={30}><Svg w={20} h={20}><path d="M5 0V20M10 0V20M15 0V20M0 5H20M0 10H20M0 15H20" stroke="#e6e6e6" /></Svg></StatusBtn>
        <StatusBtn w={30}><Svg w={16} h={16}>{[1, 7, 13].flatMap((x) => [1, 7, 13].map((y) => <rect key={`${x}${y}`} x={x} y={y} width="2.5" height="2.5" fill="#e0e0e0" />))}</Svg></StatusBtn>
        <div className="pl-[3px]"><SCaret /></div>
      </Seg>
      <Seg width={28}><Svg w={28} h={20}><path d="M12 2V8" stroke="#ccc" /><rect x="14" y="9" width="13" height="6" fill="#d0d0d0" /><path d="M2 6h12" stroke="#888" /></Svg></Seg>
      <Seg width={211}>
        <StatusBtn w={30}><Svg w={20} h={20}><path d="M2 1V19H20M2 14H8V19" stroke="#c9ccd1" /></Svg></StatusBtn>
        <StatusBtn w={30}><Svg w={22} h={20}><circle cx="10" cy="11" r="8" stroke="#c9ccd1" /><path d="M4 17L20 3M10 11h10" stroke="#c9ccd1" /></Svg></StatusBtn>
        <SCaret />
        <StatusBtn w={32}><Svg w={20} h={24}><path d="M10 0V24" stroke="#55b060" /><path d="M2 4l16 16" stroke="#e06a5a" /><rect x="8" y="10" width="4" height="4" stroke="#ddd" /></Svg></StatusBtn>
        <div className="pl-[1px]"><SCaret /></div>
        <div className="w-[7px] shrink-0" />
        <StatusBtn on w={28}><Svg w={24} h={22}><path d="M3 17L20 3M1 19H23" stroke="#eef" strokeWidth="1.2" /><rect x="9" y="8" width="4" height="4" fill="#fff" /></Svg></StatusBtn>
        <div className="w-[1px] shrink-0" />
        <StatusBtn on w={29}><Svg w={22} h={24}><rect x="1" y="6" width="19" height="17" stroke="#fff" /><rect x="1" y="1" width="5" height="5" fill="#5c8fc4" stroke="#fff" /></Svg></StatusBtn>
        <div className="pl-[6px]"><SCaret /></div>
      </Seg>
      <Seg width={49} className="-ml-[2px]">
        <div className="ml-[4px]"><Svg w={22} h={24}><rect x="1" y="7" width="14" height="15" stroke="#c9ccd1" /><path d="M1 7l6-6h14v15l-6 6M15 7l6-6" stroke="#c9ccd1" /><rect x="0" y="17" width="6" height="6" stroke="#e0a070" /></Svg></div>
        <div className="ml-[4px]"><SCaret /></div>
      </Seg>
      <Seg width={132} className="ml-[1px]">
        <StatusBtn on w={29}><Rocket c="#fff" mark="ring" /></StatusBtn>
        <StatusBtn w={30}><Rocket mark="bolt" /></StatusBtn>
        <StatusBtn w={30}><Rocket /></StatusBtn>
        <span className="ml-[7px] text-[14.7px] text-[#d6d9de]">1:1</span>
        <SCaret />
      </Seg>
      <Seg width={50}>
        <div className="ml-[4px]"><Svg w={20} h={20}><circle cx="10" cy="10" r="6" stroke="#c9ccd1" strokeWidth="4" /><path d="M10 0V4M10 16V20M0 10H4M16 10H20M3 3L6 6M14 14L17 17M17 3L14 6M6 14L3 17" stroke="#c9ccd1" strokeWidth="3" /></Svg></div>
        <div className="ml-[2px]"><SCaret /></div>
      </Seg>
      <Seg width={30} className="justify-center -ml-[2px]"><Svg w={20} h={20}><path d="M10 0V20M0 10H20" stroke="#d6d9de" strokeWidth="2.4" /></Svg></Seg>
      <Seg width={30} className="justify-center"><Svg w={22} h={24}><rect x="1" y="1" width="8" height="8" stroke="#c9ccd1" /><circle cx="17" cy="11" r="4" stroke="#c9ccd1" /><path d="M3 22l4-7 4 7z" stroke="#c9ccd1" /></Svg></Seg>
      <Seg width={38} className="justify-center"><Svg w={20} h={24}><rect width="20" height="24" fill="#d9d9d9" /><path d="M1 14l4-6 4 2 5-4 5 10" stroke="#5c8fc4" /><path d="M10 22l5-12 5 12z" fill="#e89a5a" /></Svg></Seg>
      <Seg width={61}>
        <div className="ml-[5px]"><Svg w={20} h={18}><rect x=".5" y=".5" width="19" height="17" stroke="#c9ccd1" /><path d="M3 14l4-4M3 10v4h4M16 4l-4 4M12 4h4v4" stroke="#9ec8ec" /></Svg></div>
        <div className="ml-[10px] flex flex-col gap-[5px]"><span className="block w-[20px] h-[3px] bg-[#d6d9de]" /><span className="block w-[20px] h-[3px] bg-[#d6d9de]" /><span className="block w-[20px] h-[3px] bg-[#d6d9de]" /></div>
      </Seg>
    </div>
  );
}

type TaskItem = { el: ReactNode; dot?: boolean; active?: boolean };

const taskItems: TaskItem[] = [
  { el: <div className="grid grid-cols-2 gap-[2px] w-[30px] h-[30px]"><span className="bg-[#7fdcf8] rounded-tl-[2px]" /><span className="bg-[#46b8f0] rounded-tr-[2px]" /><span className="bg-[#33b0f2]" /><span className="bg-[#1a94e6]" /></div> },
  { el: <Svg w={28} h={28}><circle cx="12" cy="12" r="10" fill="#33302f" stroke="#eee" strokeWidth="2.6" /><path d="M19 19l7 7" stroke="#c9c9c9" strokeWidth="3" /></Svg> },
  { el: <Svg w={30} h={30}><rect x="1" y="10" width="18" height="19" rx="2" fill="#666" /><rect x="11" y="1" width="18" height="19" rx="2" fill="#e8e8e8" /><rect x="11" y="10" width="8" height="10" fill="#aaa" /></Svg> },
  { el: <Svg w={30} h={30}><circle cx="15" cy="14" r="13" fill="#6d5fc7" /><path d="M4 22l-1 7 8-3z" fill="#6d5fc7" /><rect x="8" y="9" width="10" height="11" rx="2" fill="#f3f3f3" /><path d="M19 13l4-2v8l-4-2z" fill="#f3f3f3" /></Svg> },
  { el: <div className="w-[30px] h-[30px] bg-black flex items-center justify-center text-[#d81f26] text-[26px] font-bold font-['Liberation_Sans',sans-serif]">N</div> },
  { el: <div className="w-[28px] h-[28px] rounded-full bg-[#fff] flex items-center justify-center"><FaWhatsapp size={28} color="#2bb741" /></div> },
  { el: <div className="w-[30px] h-[30px] rounded-full bg-[#5865d8] flex items-center justify-center"><FaDiscord size={21} color="#fff" /></div> },
  { dot: true, el: <Svg w={30} h={32}><circle cx="15" cy="18" r="13" fill="#f5672a" /><path d="M14 1c7 2 14 9 15 17C26 12 22 10 18 9z" fill="#ffcb2e" /><circle cx="15" cy="18" r="6" fill="#7a3ec4" /></Svg> },
  { dot: true, el: <Svg w={30} h={30}><circle cx="15" cy="15" r="14.5" fill="#1f8fd6" /><path d="M1 13C3 5 9 .5 15 .5c8 0 14.5 6 14.5 13 0 5-7 7-10 4 3-6-4-10-9-8-4 1-7 3-9.500 3.500z" fill="#4fcf9a" /><path d="M11 13c-5 2-5 10 2 13 4 2 8 1 11-1-5 1-11-2-10-8 0-2-1-3-3-4z" fill="#0d4f92" /></Svg> },
  { el: <Svg w={30} h={30}><circle cx="15" cy="15" r="14" fill="#2a65b8" /><path d="M5 12l12-3 8 6-6 12L8 20z" fill="#e8e8e8" /><path d="M8 14l10 3 6-4" stroke="#8aa" /></Svg> },
  { dot: true, el: <Svg w={30} h={30}><path d="M0 3h12l3 3h15v23H0z" fill="#f5c342" /><rect x="0" y="10" width="30" height="19" fill="#fbd758" /><rect x="9" y="21" width="14" height="8" fill="#1a7fd0" /></Svg> },
  { el: <Svg w={22} h={30}><path d="M1 1h14l6 6v22H1z" fill="#f5f5f5" /><path d="M15 1l6 6h-6z" fill="#bbb" /></Svg> },
  { el: <Svg w={30} h={30}><path d="M5 5l20-3v26L5 25z" fill="#cfe0f4" /><path d="M1 5l16-3v22L1 22z" fill="#2f6cc0" /><text x="6" y="17" fontSize="13" fontWeight="700" fill="#fff" fontFamily="Liberation Sans">W</text></Svg> },
  { el: <Svg w={30} h={30}><path d="M5 5l20-3v26L5 25z" fill="#f8dcc8" /><path d="M1 5l16-3v22L1 22z" fill="#e8754a" /><circle cx="19" cy="14" r="6" fill="#d9532a" /></Svg> },
  { el: <div className="w-[29px] h-[30px] bg-[#a80f0f] flex items-center justify-center text-white text-[23px] font-bold italic font-['Liberation_Sans',sans-serif]">Fz</div> },
  { el: <div className="relative w-[30px] h-[30px]"><span className="block text-[38px] leading-[30px] font-bold text-[#f01010] font-['Liberation_Sans',sans-serif]">B</span><span className="absolute right-0 bottom-0 w-[11px] h-[11px] rotate-45 bg-[#1010e0]" /></div> },
  { el: <Svg w={30} h={32}><circle cx="14" cy="14" r="11" stroke="#7fa52f" strokeWidth="5" /><path d="M14 13l13 15-4 3-12-15z" fill="#7fa52f" /><circle cx="14" cy="14" r="3" fill="#e09030" /></Svg> },
  { el: <Svg w={26} h={34}><path d="M13 1l12 6v12l-9 12h-6L1 19V7z" fill="#e0e4ea" /><path d="M13 5l8 4-8 4-8-4z" fill="#2f5a8f" /><path d="M5 10l7 4v10l-7-7zM21 10l-7 4v10l7-7z" fill="#1c3a66" /></Svg> },
  { dot: true, el: <Svg w={30} h={32}><path d="M15 1c8 0 14 6 14 13 0 8-8 7-10 9-2 3-1 8-6 8C5 31 1 23 1 15 1 7 7 1 15 1z" fill="#27a3e0" /><circle cx="9" cy="12" r="3" fill="#d9532a" /><circle cx="17" cy="7" r="3" fill="#f0c040" /><circle cx="8" cy="21" r="3" fill="#333" /><rect x="21" y="10" width="3" height="20" fill="#a97b45" /></Svg> },
  { el: <Svg w={30} h={24}><path d="M1 12c3-4 8-6 14-5l8-6v10l3 8-6-2-9 1z" fill="#666" /><circle cx="7" cy="11" r="2.500" fill="#fff" /><circle cx="12" cy="10" r="2.500" fill="#fff" /><path d="M12 16l16 7" stroke="#c89060" strokeWidth="2" /></Svg> },
  { el: <Svg w={26} h={32}><path d="M3 5L20 1l6 8-3 18-12 4-8-6z" fill="#dc3535" /><path d="M10 12h8l-3 5h5l-3 4H9l2-4H7z" fill="#f5f5f5" /></Svg> },
  { el: <Svg w={28} h={30}><ellipse cx="14" cy="18" rx="11" ry="12" fill="#8cf03c" /><circle cx="19" cy="8" r="6" fill="#c92020" /><path d="M3 12l22 6M14 6V24" stroke="#c89a20" /></Svg> },
  { active: true, el: <div className="w-[30px] h-[36px] mt-[-2px] flex flex-col"><div className="h-[24px] rounded-t-[3px] bg-[#e3225a] text-white text-[18px] font-bold flex items-center justify-center font-['Liberation_Sans',sans-serif]">A</div><div className="h-[12px] bg-[#7d1a35] text-white text-[7px] font-bold flex items-center justify-center font-['Liberation_Sans',sans-serif]">CAD</div></div> },
  { el: <div className="w-[28px] h-[36px] flex flex-col"><div className="h-[25px] rounded-t-[3px] bg-[#1c6fe0] text-white text-[18px] font-bold flex items-center justify-center font-['Liberation_Sans',sans-serif]">R</div><div className="h-[11px] bg-[#123f8c] text-white text-[7px] font-bold flex items-center justify-center font-['Liberation_Sans',sans-serif]">RVT</div></div> },
  { el: <div className="relative"><Svg w={28} h={34}><ellipse cx="14" cy="16" rx="14" ry="15" fill="#c4c4c8" /><path d="M1 10c8-3 16 4 26 0M1 18c8-3 16 4 26 0" stroke="#7d7d84" strokeWidth="3" /></Svg><span className="absolute right-[2px] bottom-0 text-[8px] text-[#ddd] bg-[#444] px-[1px]">Pro</span></div> },
  { dot: true, el: <Svg w={26} h={36}><path d="M1 1h18l6 6v28H1z" fill="#2a8fd0" /><rect x="4" y="8" width="18" height="24" fill="#f4f8fb" /><rect x="6" y="11" width="6" height="5" fill="#2a8fd0" /><rect x="14" y="11" width="6" height="5" fill="#9bc7e6" /><path d="M6 19h14M6 22h14M6 25h14M6 28h10" stroke="#2a8fd0" /></Svg> },
];

function Taskbar() {
  return (
    <div className="mt-[2px] h-[60px] bg-[#282020] flex items-center pl-[13px] pb-[2px] border-t border-[#3a3a3a]">
      {taskItems.map((it, i) => (
        <div key={i} className="relative w-[55px] h-full flex items-center justify-center shrink-0">
          {it.active && <div className="absolute left-[3px] top-[4px] w-[50px] h-[50px] rounded-[5px] bg-[#3a3030]" />}
          <div className="relative">{it.el}</div>
          {it.dot && <span className="absolute bottom-[4px] w-[8px] h-[4px] rounded-full bg-[#8a8a8a]" />}
          {it.active && <span className="absolute bottom-[3px] w-[20px] h-[4px] rounded-full bg-[#f09a4a]" />}
        </div>
      ))}
      <div className="ml-[168px]"><Svg w={14} h={9}><path d="M1 8l6-6 6 6" stroke="#eee" strokeWidth="2" /></Svg></div>
      <div className="ml-[22px]"><Svg w={24} h={26}><path d="M3 10A10 10 0 0 1 21 6M4 20a10 10 0 0 0 9 4" stroke="#ddd" strokeWidth="1.3" /><path d="M19 1v6h-6" stroke="#ddd" strokeWidth="1.3" /><path d="M1 14v7h6" stroke="#ddd" strokeWidth="1.3" /><circle cx="16" cy="18" r="5" fill="#f59a1e" /></Svg></div>
      <div className="ml-[17px]"><Svg w={20} h={16}><path d="M1 5a13 13 0 0 1 18 0M4 8a9 9 0 0 1 12 0M7 11a5 5 0 0 1 6 0" stroke="#eee" strokeWidth="1.5" /><circle cx="10" cy="14" r="1.5" fill="#eee" /></Svg></div>
      <div className="ml-[9px]"><Svg w={20} h={18}><path d="M1 6h4l5-4v14l-5-4H1z" stroke="#eee" /><path d="M13 5c2 2 2 6 0 8M16 3c3 3 3 9 0 12" stroke="#888" /></Svg></div>
      <div className="ml-[12px]"><Svg w={20} h={20}><rect x="1" y="6" width="16" height="11" rx="2" stroke="#eee" /><rect x="3" y="8" width="7" height="7" fill="#eee" /><path d="M18 9v5" stroke="#eee" strokeWidth="1.5" /><path d="M7 1L4 8h4l-2 5" stroke="#eee" /></Svg></div>
      <div className="ml-[20px] flex flex-col items-end text-[15px] leading-[20px] text-[#ececec] w-[78px]">
        <span>12:20</span>
        <span>13/04/2023</span>
      </div>
      <div className="ml-[9px] w-[20px] h-[20px] rounded-full bg-[#f59a3c] text-[#3a2a1a] text-[13px] flex items-center justify-center">4</div>
    </div>
  );
}

export default function App() {
  return (
    <div className="relative w-[1920px] h-[1080px] overflow-hidden bg-[#222933] font-['Roboto',sans-serif] select-none">
      <TitleBar />
      <MenuTabs />
      <Ribbon />
      <DocTabs />
      <div className="h-[6px] bg-[#3b4452]" />
      <Canvas />
      <div className="h-[5px] bg-[#3b4452]" />
      <LayoutTabs />
      <StatusBar />
      <Taskbar />
    </div>
  );
}
